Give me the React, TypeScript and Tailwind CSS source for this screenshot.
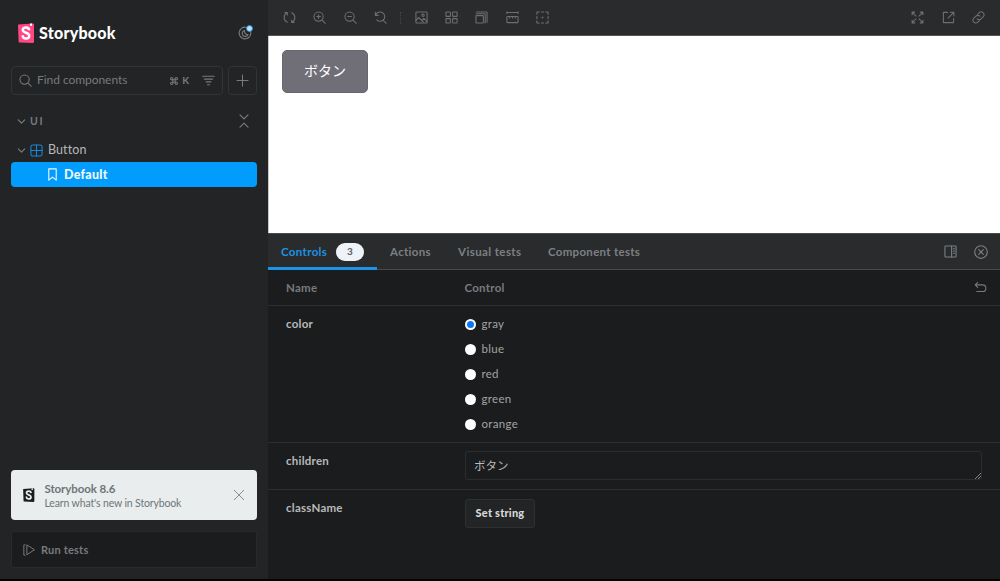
import type { ReactNode } from "react";
import clsx from "clsx";

interface IconProps {
  className?: string;
  children: ReactNode;
}

function Icon({ className, children }: IconProps) {
  return (
    <svg
      viewBox="0 0 14 14"
      fill="none"
      stroke="currentColor"
      strokeWidth="1.15"
      strokeLinecap="round"
      strokeLinejoin="round"
      className={clsx("shrink-0", className ?? "size-[13px]")}
    >
      {children}
    </svg>
  );
}

const sync = (
  <path d="M2 1.6h2.6v2.6M4.4 1.9A5.7 5.7 0 0 0 4.6 12.2M12 12.4H9.4V9.8M9.6 12.1A5.7 5.7 0 0 0 9.4 1.8" />
);

const lens = <path d="M9.5 9.5 13.2 13.2M11 6A5 5 0 1 1 1 6a5 5 0 0 1 10 0Z" />;

const zoomIn = (
  <>
    {lens}
    <path d="M6 4v4M4 6h4" />
  </>
);

const zoomOut = (
  <>
    {lens}
    <path d="M4 6h4" />
  </>
);

const zoomReset = <path d="M1.5 1.5v3.2h3.2M1.8 4.5A5 5 0 1 1 3 9.6M9.7 9.7l3.5 3.5" />;

const photo = (
  <>
    <rect x="1" y="1" width="12" height="12" rx=".8" />
    <path d="m1 10 3-3 5 5M7.5 10l2-2 3.5 3.5" />
    <circle cx="8.6" cy="4.7" r="1.3" />
  </>
);

const grid = (
  <>
    <rect x="1" y="1" width="4.8" height="4.8" rx=".5" />
    <rect x="8.2" y="1" width="4.8" height="4.8" rx=".5" />
    <rect x="1" y="8.2" width="4.8" height="4.8" rx=".5" />
    <rect x="8.2" y="8.2" width="4.8" height="4.8" rx=".5" />
  </>
);

const grow = (
  <>
    <rect x="1" y="5" width="8" height="8" rx=".5" />
    <path d="M1.2 3h9.3c.3 0 .5.2.5.5v9.3M1.8 1h10.7c.3 0 .5.2.5.5v10.7" />
  </>
);

const ruler = (
  <>
    <path d="M1 1.7h12M1 .8v1.8M13 .8v1.8M4 6v1.6M7 6v1.6M10 6v1.6" />
    <rect x="1" y="6" width="12" height="6.5" rx=".5" />
  </>
);

const outline = (
  <>
    <path d="M1 3.5V1h2.5M5.8 1h2.4M10.5 1H13v2.5M13 5.8v2.4M13 10.5V13h-2.5M8.2 13H5.8M3.5 13H1v-2.5M1 8.2V5.8" />
    <path d="M6.6 7h.8" strokeWidth="1.4" />
  </>
);

const expand = (
  <path d="M1.2 4V1.2H4M1.4 1.4l4 4M10 1.2h2.8V4M12.6 1.4l-4 4M1.2 10v2.8H4M1.4 12.6l4-4M12.8 10v2.8H10M12.6 12.6l-4-4" />
);

const share = <path d="M6 1.5H1.5v11h11V8M8.8 1.3h4v4M12.6 1.5 6.5 7.6" />;

const link = (
  <path d="m6 3.6 1.7-1.7a3 3 0 0 1 4.3 4.3L9.8 8.4a3 3 0 0 1-4.3 0M8 10.4l-1.7 1.7A3 3 0 0 1 2 7.8l2.2-2.2a3 3 0 0 1 4.3 0" />
);

const sidebarRight = (
  <>
    <rect x="1" y="1" width="12" height="12" rx=".8" />
    <path d="M8.2 1v12M10 4h1.3M10 6.4h1.3M10 8.8h1.3" />
  </>
);

const closeCircle = (
  <>
    <circle cx="7" cy="7" r="6.3" />
    <path d="m4.7 4.7 4.6 4.6M9.3 4.7 4.7 9.3" />
  </>
);

const undo = <path d="M4 1.5 1.3 4.2 4 6.9M1.6 4.2h7.6a3.6 3.6 0 0 1 0 7.2H3" />;

const toolbarLeft = [sync, zoomIn, zoomOut, zoomReset];
const toolbarMiddle = [photo, grid, grow, ruler, outline];
const toolbarRight = [expand, share, link];
const colors = ["gray", "blue", "red", "green", "orange"];

function StorybookMark({ dark, className }: { dark?: boolean; className: string }) {
  return (
    <svg viewBox="0 0 16 20" className={clsx("shrink-0", className)}>
      <path
        d="M.3 1.5 15 .4c.6 0 1 .4 1 1v17.3c0 .7-.4 1.2-1 1.2L1.6 19.4c-.6 0-1-.5-1-1L0 2.3c0-.5 0-.8.3-.8Z"
        fill={dark ? "#1b1c1d" : "#ff4785"}
      />
      <path d="m12 .6 2-.2v2.7l-1-.7-1 .7Z" fill={dark ? "#e9eded" : "#fff"} />
      <path
        d="M11.2 7.3C11.1 5.4 9.8 4.5 8 4.5S4.8 5.5 4.8 7.1c0 3.2 6.4 2.2 6.4 5.6 0 1.8-1.2 2.8-3.2 2.8-2.1 0-3.4-1-3.3-3.3"
        fill="none"
        stroke={dark ? "#e9eded" : "#fff"}
        strokeWidth="2.5"
      />
    </svg>
  );
}

function Chevron() {
  return (
    <Icon className="size-[9px]">
      <path d="m2 4.5 5 5 5-5" strokeWidth="1.9" />
    </Icon>
  );
}

function Sidebar() {
  return (
    <aside className="flex w-[268px] shrink-0 flex-col bg-[#222425] px-[11px] pt-[22px] text-[#777b7e]">
      <div className="flex h-[22px] items-center pr-[5px] pl-[7px]">
        <StorybookMark className="h-5 w-4" />
        <span className="ml-[5px] text-[16px] font-black tracking-[0.25px] text-white">Storybook</span>
        <span className="relative ml-auto">
          <Icon className="size-[14px]">
            <circle cx="7" cy="7" r="5.8" strokeWidth="1.2" strokeDasharray="2.8 1.1" />
            <path d="M6.5 4.5a3 3 0 1 0 3.5 4 3.2 3.2 0 0 1-3.5-4Z" />
          </Icon>
          <span className="absolute -top-px -right-px size-[7px] rounded-full border border-[#2389da] bg-[#c1dff5]" />
        </span>
      </div>

      <div className="mt-[22px] flex h-[29px] gap-[5px]">
        <div className="flex w-[212px] items-center rounded-[4px] border border-[#323537] px-[7px]">
          <Icon className="size-[13px]">{lens}</Icon>
          <span className="ml-[5px] pb-px text-[12px] tracking-[-0.05px]">Find components</span>
          <span className="ml-auto flex items-center gap-1 text-[10px] font-bold">
            <Icon className="size-2">
              <path
                d="M5 5H3a2 2 0 1 1 2-2v8a2 2 0 1 1-2-2h8a2 2 0 1 1-2 2V3a2 2 0 1 1 2 2H5"
                strokeWidth="1.8"
              />
            </Icon>
            K
          </span>
          <Icon className="ml-[13px] size-[13px]">
            <path d="M.7 2.5h12.6M2.5 5.5h9M4.5 8.5h5M6 11.5h2" />
          </Icon>
        </div>
        <div className="grid w-[29px] place-items-center rounded-[4px] border border-[#323537]">
          <Icon className="size-[13px]">
            <path d="M7 1v12M1 7h12" />
          </Icon>
        </div>
      </div>

      <div className="mt-[16px] flex h-5 items-center pl-[6px]">
        <Chevron />
        <span className="ml-[4px] pt-px text-[10.5px] font-bold tracking-[1.6px]">UI</span>
        <Icon className="mr-[6px] ml-auto size-[14px]">
          <path d="m3 .8 4 4 4-4M3 13.2l4-4 4 4" />
        </Icon>
      </div>
      <div className="mt-[6px] flex h-[25px] items-center pt-px pl-[6px] text-[12.5px] text-[#b6b8ba]">
        <span className="text-[#777b7e]">
          <Chevron />
        </span>
        <Icon className="ml-[4px] size-[13px] text-[#1687d8]">
          <rect x="1" y="1" width="12" height="12" rx="2" />
          <path d="M7 1v12M1 7h12" />
        </Icon>
        <span className="ml-[5px] pt-px tracking-[0.1px]">Button</span>
      </div>
      <div className="flex h-[25px] w-[246px] items-center rounded-[4px] bg-[#029cfd] pl-[35px] text-[12.5px] font-black text-[#eef8ff]">
        <Icon className="size-[13px]">
          <path d="M3 1h8v12L7 9.8 3 13V1Z" strokeWidth="1.2" />
        </Icon>
        <span className="ml-[5px] pt-[2px] tracking-[0.25px]">Default</span>
      </div>

      <div className="mt-auto flex h-[50px] w-[246px] items-center rounded-[4px] bg-[#e9eded] px-[12px]">
        <StorybookMark dark className="h-[14px] w-[11.5px]" />
        <div className="ml-[10px] flex flex-col pt-px text-[#6f7679]">
          <span className="text-[11.5px] leading-[15px] font-bold tracking-[-0.1px]">Storybook 8.6</span>
          <span className="text-[10.5px] leading-[15px] tracking-[-0.14px]">Learn what's new in Storybook</span>
        </div>
        <Icon className="ml-auto size-[12px] text-[#858b8e]">
          <path d="m1.5 1.5 11 11M12.5 1.5l-11 11" />
        </Icon>
      </div>
      <div className="mt-[11px] mb-[11px] flex h-[37px] w-[246px] items-center gap-[6px] rounded-[3px] border border-[#27292a] bg-[#1b1c1d] pl-[11px] text-[11px] font-bold">
        <Icon className="size-[12px]">
          <path d="M2.5 1H1v12h1.5M4.5 1.5v11L13 7Z" />
        </Icon>
        <span className="pt-px tracking-[0.2px]">Run tests</span>
      </div>
    </aside>
  );
}

function Toolbar() {
  return (
    <div className="flex h-9 shrink-0 items-center border-b border-[#515354] bg-[#292b2d] px-[15px] text-[#6c7073]">
      <div className="flex gap-[17.3px]">
        {toolbarLeft.map((icon, i) => (
          <Icon key={i}>{icon}</Icon>
        ))}
      </div>
      <span className="ml-[13px] h-3 border-l border-dotted border-[#45484a]" />
      <div className="ml-[14px] flex gap-[17.3px]">
        {toolbarMiddle.map((icon, i) => (
          <Icon key={i}>{icon}</Icon>
        ))}
      </div>
      <div className="ml-auto flex gap-[17.5px]">
        {toolbarRight.map((icon, i) => (
          <Icon key={i}>{icon}</Icon>
        ))}
      </div>
    </div>
  );
}

function Tabs() {
  return (
    <div className="flex h-[37px] shrink-0 items-stretch border-y border-[#484a4c] bg-[#292b2d] text-[11.5px] font-bold text-[#7c8083]">
      <div className="-mb-px flex w-[109px] items-center border-b-[3px] border-[#1c93e6] pt-[2px] pl-[13px] text-[#1c93e6]">
        <span className="tracking-[0.35px]">Controls</span>
        <span className="mr-[13px] ml-auto grid h-[18px] w-7 place-items-center rounded-full bg-[#eef3f9] text-[10px] text-[#55595d]">
          3
        </span>
      </div>
      <div className="ml-[13px] flex items-center gap-[27px] whitespace-nowrap">
        <span className="w-[41px] tracking-[0.3px]">Actions</span>
        <span className="w-[63px] tracking-[0.4px]">Visual tests</span>
        <span className="tracking-[0.3px]">Component tests</span>
      </div>
      <div className="mr-[12px] ml-auto flex items-center gap-[17px]">
        <Icon>{sidebarRight}</Icon>
        <Icon className="size-[14px]">{closeCircle}</Icon>
      </div>
    </div>
  );
}

interface RowProps {
  name: string;
  className: string;
  children: ReactNode;
}

function Row({ name, className, children }: RowProps) {
  return (
    <div className={clsx("flex pl-[18px] text-[11.5px] text-[#b8babb]", className)}>
      <div className="w-[179px] pt-[10px] leading-4 font-bold tracking-[0.25px]">{name}</div>
      {children}
    </div>
  );
}

function Controls() {
  return (
    <div className="flex-1 bg-[#1b1c1d]">
      <div className="flex h-9 items-center border-b border-[#2c2e2f] pr-[13px] pl-[18px] text-[11.5px] font-bold text-[#777b7e]">
        <span className="w-[178.5px] tracking-[0.25px]">Name</span>
        <span className="tracking-[0.25px]">Control</span>
        <Icon className="ml-auto size-[13px]">{undo}</Icon>
      </div>
      <Row name="color" className="h-[137px] border-b border-[#2c2e2f]">
        <div className="flex flex-col gap-[9px] pt-[10px]">
          {colors.map((color, i) => (
            <label key={color} className="flex h-4 items-center gap-[5.5px] tracking-[0.3px] text-[#a2a4a5]">
              <span className="grid size-[11px] place-items-center rounded-full bg-white">
                {i === 0 && <span className="size-[7px] rounded-full bg-[#0878f9]" />}
              </span>
              {color}
            </label>
          ))}
        </div>
      </Row>
      <Row name="children" className="h-[47px] border-b border-[#2c2e2f]">
        <div className="relative mt-2 h-[29px] w-[517px] rounded-[3px] border border-[#2b2d2f] pl-2 font-['Noto_Sans_CJK_JP',sans-serif] text-[11.5px] leading-[26px]">
          ボタン
          <svg viewBox="0 0 7 7" className="absolute right-0 bottom-0 size-[7px] stroke-[#85888a]">
            <path d="M1 7 7 1M4 7l3-3" />
          </svg>
        </div>
      </Row>
      <Row name="className" className="h-[60px]">
        <button className="mt-[9px] h-[29px] w-[70px] rounded-[3px] border border-[#2e3132] bg-[#222425] text-[11px] font-black tracking-[0.2px] whitespace-nowrap text-[#d6d8d9]">
          Set string
        </button>
      </Row>
    </div>
  );
}

export default function App() {
  return (
    <div className="h-[581px] w-[1000px] overflow-hidden bg-black pb-[2px] font-[Lato,'Liberation_Sans',sans-serif]">
      <div className="flex h-[579px]">
        <Sidebar />
        <main className="flex w-[732px] flex-col">
          <Toolbar />
          <div className="h-[197px] shrink-0 border-l border-[#c8c8c8] bg-white pt-[14px] pl-[13px]">
            <button className="block h-[43px] w-[86px] rounded-[5px] border border-[#68666e] bg-[#706e77] pb-[3px] font-['Noto_Sans_CJK_JP',sans-serif] text-[14px] text-white">
              ボタン
            </button>
          </div>
          <Tabs />
          <Controls />
        </main>
      </div>
    </div>
  );
}
